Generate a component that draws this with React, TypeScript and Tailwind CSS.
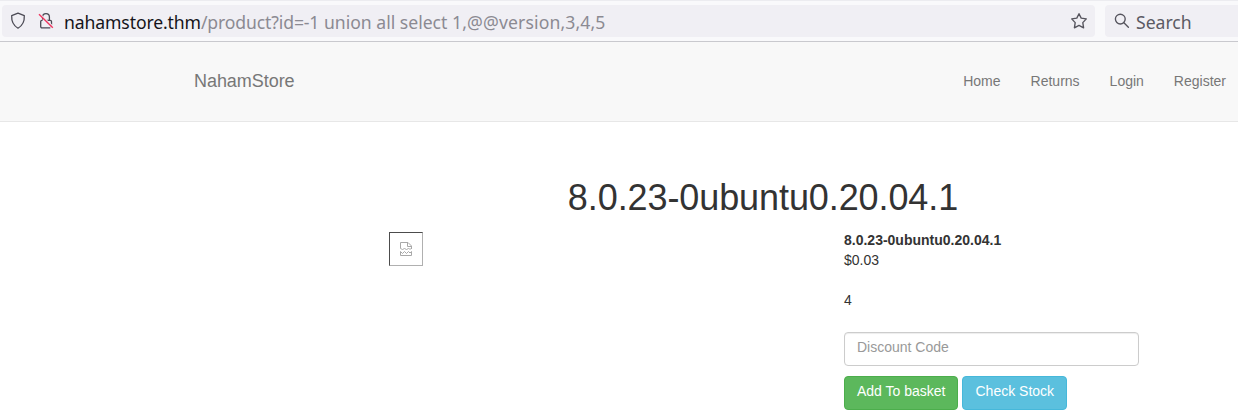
import React from "react";

const navLinks = ["Home", "Returns", "Login", "Register"];

function ShieldIcon() {
  return (
    <svg width="16" height="18" viewBox="0 0 16 18" fill="none" stroke="#4b4a54" strokeWidth="1.3" strokeLinejoin="round" className="shrink-0">
      <path d="M8 1.2 14.3 3.6C14.6 9 12.8 13.4 8 16.2 3.2 13.4 1.4 9 1.7 3.6Z" />
    </svg>
  );
}

function InsecureIcon() {
  return (
    <svg width="16" height="18" viewBox="0 0 16 18" fill="none" className="shrink-0">
      <path d="M4.6 7.5V5a3.4 3.4 0 0 1 6.8 0V8.4M4.6 8.4H3.9a1.2 1.2 0 0 0-1.2 1.2v5a1.2 1.2 0 0 0 1.2 1.2h8.4M8.4 8.4h3.9a1.2 1.2 0 0 1 1.2 1.2v5" stroke="#4b4a54" strokeWidth="1.3" />
      <path d="M1.8 2 15.6 15" stroke="#f0eff4" strokeWidth="1.4" />
      <path d="M1 2.2 14.8 15.8" stroke="#f0355f" strokeWidth="1.4" />
    </svg>
  );
}

function StarIcon() {
  return (
    <svg width="18" height="18" viewBox="0 0 18 18" fill="none" stroke="#55545d" strokeWidth="1.35" strokeLinejoin="round" className="shrink-0">
      <path d="M9 1.7 11.2 6.1 16.3 6.9 12.8 10.6 13.6 15.8 9 13.4 4.4 15.8 5.2 10.6 1.7 6.9 6.8 6.1Z" />
    </svg>
  );
}

function SearchIcon() {
  return (
    <svg width="16" height="16" viewBox="0 0 16 16" fill="none" stroke="#55545d" strokeWidth="1.35" strokeLinecap="round" className="shrink-0">
      <circle cx="6.3" cy="6.1" r="4.9" />
      <path d="M9.9 9.7 14.4 14.2" />
    </svg>
  );
}

function BrokenImage() {
  return (
    <div className="flex h-[34px] w-[34px] items-center justify-center border border-t-[#4c4c4c] border-l-[#4c4c4c] border-r-[#b0b0b0] border-b-[#b0b0b0]">
      <svg width="12" height="14" viewBox="0 0 12 14" fill="none" stroke="#a8a8a8">
        <path d="M.5 6.5V.5H8L11.5 4V7M7.5 .5V4.5H11.5M.5 6 2.5 8 4.5 6 6.5 8 8.5 6 10 7.5 11.5 6M.5 13.5V9.5L2.5 11.5 4.5 9.5 6.5 11.5 8.5 9.5 10 11 11.5 9.5V13.5Z" />
      </svg>
    </div>
  );
}

function BrowserBar() {
  return (
    <div className="flex h-[42px] border-b border-[#c9c9ce] bg-[#f9f9fb]">
      <div className="flex w-full border-t border-[#ececf0] pt-1 pl-0.5 font-['Noto_Sans',sans-serif] text-[17.6px]">
        <div className="flex h-8 w-[1093px] items-center rounded-[4px] bg-[#f0eff4] pr-[7px] pl-2">
          <ShieldIcon />
          <div className="ml-3 flex">
            <InsecureIcon />
          </div>
          <div className="ml-[10px] flex-1 whitespace-pre pt-[2px] leading-8 text-[#8b8a92]">
            <span className="tracking-[-0.12px] text-[#15141a]">nahamstore.thm</span>
            <span className="tracking-[-0.13px]">/product?id=-1</span>
            <span> union all select </span>
            <span className="tracking-[0.13px]">1,@@version,3,4,5</span>
          </div>
          <StarIcon />
        </div>
        <div className="ml-[10px] flex h-8 flex-1 items-center rounded-l-[4px] bg-[#f0eff4] pl-[9px] text-[#5b5a63]">
          <SearchIcon />
          <span className="ml-[6px] pt-[2px] leading-8">Search</span>
        </div>
      </div>
    </div>
  );
}

export default function App() {
  return (
    <div className="h-[415px] overflow-hidden bg-white font-['Liberation_Sans',Arial,sans-serif] text-[14px] leading-5 text-[#333]">
      <BrowserBar />
      <nav className="flex h-20 items-center justify-between border-b border-[#e7e7e7] bg-[#f8f8f8] pr-3 pb-[2px] pl-[194px] text-[#777]">
        <a className="text-[18px] tracking-[-0.05px]">NahamStore</a>
        <div className="flex gap-[30px]">
          {navLinks.map((label) => (
            <a key={label}>{label}</a>
          ))}
        </div>
      </nav>
      <main className="pt-14 pl-[194px]">
        <h1 className="w-[1138px] text-center text-[36px] leading-10 tracking-[-0.09px]">8.0.23-0ubuntu0.20.04.1</h1>
        <div className="mt-3 flex">
          <div className="w-[650px] pt-[2px] pl-[195px]">
            <BrokenImage />
          </div>
          <div className="w-[295px]">
            <div className="font-bold">8.0.23-0ubuntu0.20.04.1</div>
            <div>$0.03</div>
            <div className="mt-5">4</div>
            <input
              placeholder="Discount Code"
              className="mt-[22px] block h-[34px] w-full rounded-[4px] border border-[#ccc] px-3 pt-1 pb-2 shadow-[inset_0_1px_1px_rgba(0,0,0,0.075)] placeholder:text-[#999]"
            />
            <div className="mt-[10px] flex gap-1 text-white">
              <button className="h-[34px] rounded-[4px] border border-[#4cae4c] bg-[#5cb85c] px-3 pb-1">Add To basket</button>
              <button className="h-[34px] rounded-[4px] border border-[#46b8da] bg-[#5bc0de] px-3 pb-1">Check Stock</button>
            </div>
          </div>
        </div>
      </main>
    </div>
  );
}
